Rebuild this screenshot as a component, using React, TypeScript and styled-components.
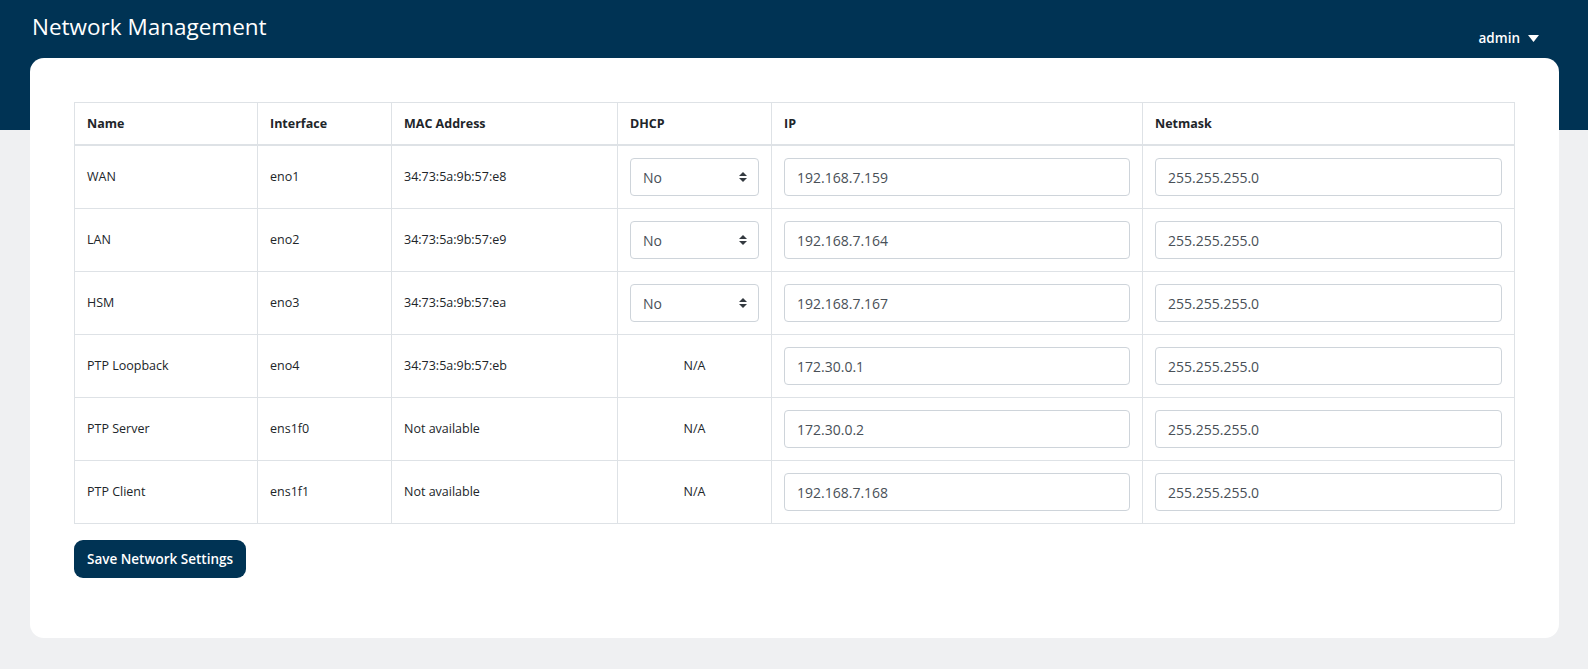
import styled, { createGlobalStyle } from "styled-components";

const GlobalStyle = createGlobalStyle`
  html, body {
    margin: 0;
    padding: 0;
  }
  body {
    font-family: "Open Sans", "Noto Sans", sans-serif;
    color: #212529;
  }
  * {
    box-sizing: border-box;
  }
`;

const Page = styled.div`
  min-height: 100vh;
  background: linear-gradient(#003354 0 130px, #eff0f2 130px);
  padding-bottom: 31px;
  display: flex;
  flex-direction: column;
`;

const TopBar = styled.header`
  height: 58px;
  display: flex;
  justify-content: space-between;
  align-items: flex-start;
  padding: 0 49px 0 32px;
  color: #fff;
`;

const Title = styled.h1`
  margin: 0;
  padding-top: 12px;
  font-size: 22.5px;
  line-height: 30px;
  font-weight: 500;
`;

const UserMenu = styled.button`
  margin-top: 29px;
  display: flex;
  align-items: center;
  gap: 8px;
  border: none;
  background: none;
  padding: 0;
  color: #fff;
  font-family: inherit;
  font-size: 13.5px;
  font-weight: 600;
  line-height: 18px;
  cursor: pointer;
`;

const Card = styled.main`
  margin: 0 29px 0 30px;
  background: #fff;
  border-radius: 14px;
  padding: 44px 45px 60px 44px;
`;

const Table = styled.table`
  width: 100%;
  table-layout: fixed;
  border-collapse: collapse;
  font-size: 12.5px;
`;

const Th = styled.th`
  text-align: left;
  font-weight: 700;
  padding: 12px 12px;
  line-height: 17px;
  border: 1px solid #dee2e6;
  border-bottom: 2px solid #dee2e6;
`;

const Td = styled.td<{ $center?: boolean }>`
  padding: 12px 12px;
  height: 63px;
  line-height: 18px;
  border: 1px solid #dee2e6;
  vertical-align: middle;
  text-align: ${(p) => (p.$center ? "center" : "left")};
`;

const Input = styled.input`
  display: block;
  width: 100%;
  height: 38px;
  padding: 6px 12px;
  border: 1px solid #ced4da;
  border-radius: 4px;
  font-family: inherit;
  font-size: 14px;
  color: #495057;
  background: #fff;
`;

const SelectWrap = styled.div`
  position: relative;
`;

const Select = styled.select`
  display: block;
  width: 100%;
  height: 38px;
  padding: 6px 28px 6px 12px;
  border: 1px solid #ced4da;
  border-radius: 4px;
  font-family: inherit;
  font-size: 14px;
  color: #495057;
  background: #fff;
  appearance: none;
`;

const SelectArrow = styled.svg`
  position: absolute;
  right: 12px;
  top: 50%;
  transform: translateY(-50%);
  pointer-events: none;
`;

const SaveButton = styled.button`
  margin-top: 16px;
  height: 38px;
  padding: 0 13px;
  border: none;
  border-radius: 9px;
  background: #003354;
  color: #fff;
  font-family: inherit;
  font-size: 13.5px;
  font-weight: 600;
  cursor: pointer;
`;

type Row = {
  name: string;
  iface: string;
  mac: string;
  dhcp: boolean;
  ip: string;
  mask: string;
};

const rows: Row[] = [
  { name: "WAN", iface: "eno1", mac: "34:73:5a:9b:57:e8", dhcp: true, ip: "192.168.7.159", mask: "255.255.255.0" },
  { name: "LAN", iface: "eno2", mac: "34:73:5a:9b:57:e9", dhcp: true, ip: "192.168.7.164", mask: "255.255.255.0" },
  { name: "HSM", iface: "eno3", mac: "34:73:5a:9b:57:ea", dhcp: true, ip: "192.168.7.167", mask: "255.255.255.0" },
  { name: "PTP Loopback", iface: "eno4", mac: "34:73:5a:9b:57:eb", dhcp: false, ip: "172.30.0.1", mask: "255.255.255.0" },
  { name: "PTP Server", iface: "ens1f0", mac: "Not available", dhcp: false, ip: "172.30.0.2", mask: "255.255.255.0" },
  { name: "PTP Client", iface: "ens1f1", mac: "Not available", dhcp: false, ip: "192.168.7.168", mask: "255.255.255.0" },
];

const widths = [183, 134, 226, 154, 371, 372];

function App() {
  return (
    <>
      <GlobalStyle />
      <Page>
        <TopBar>
          <Title>Network Management</Title>
          <UserMenu>
            admin
            <svg width="11" height="7" viewBox="0 0 11 7">
              <path d="M0 0h11L5.5 7z" fill="#fff" />
            </svg>
          </UserMenu>
        </TopBar>
        <Card>
          <Table>
            <colgroup>
              {widths.map((w, i) => (
                <col key={i} style={{ width: w }} />
              ))}
            </colgroup>
            <thead>
              <tr>
                <Th>Name</Th>
                <Th>Interface</Th>
                <Th>MAC Address</Th>
                <Th>DHCP</Th>
                <Th>IP</Th>
                <Th>Netmask</Th>
              </tr>
            </thead>
            <tbody>
              {rows.map((r) => (
                <tr key={r.iface}>
                  <Td>{r.name}</Td>
                  <Td>{r.iface}</Td>
                  <Td>{r.mac}</Td>
                  {r.dhcp ? (
                    <Td>
                      <SelectWrap>
                        <Select defaultValue="no">
                          <option value="no">No</option>
                          <option value="yes">Yes</option>
                        </Select>
                        <SelectArrow width="8" height="10" viewBox="0 0 8 10">
                          <path d="M4 0L8 4H0z M4 10L0 6h8z" fill="#343a40" />
                        </SelectArrow>
                      </SelectWrap>
                    </Td>
                  ) : (
                    <Td $center>N/A</Td>
                  )}
                  <Td>
                    <Input defaultValue={r.ip} />
                  </Td>
                  <Td>
                    <Input defaultValue={r.mask} />
                  </Td>
                </tr>
              ))}
            </tbody>
          </Table>
          <SaveButton>Save Network Settings</SaveButton>
        </Card>
      </Page>
    </>
  );
}

export default App;
